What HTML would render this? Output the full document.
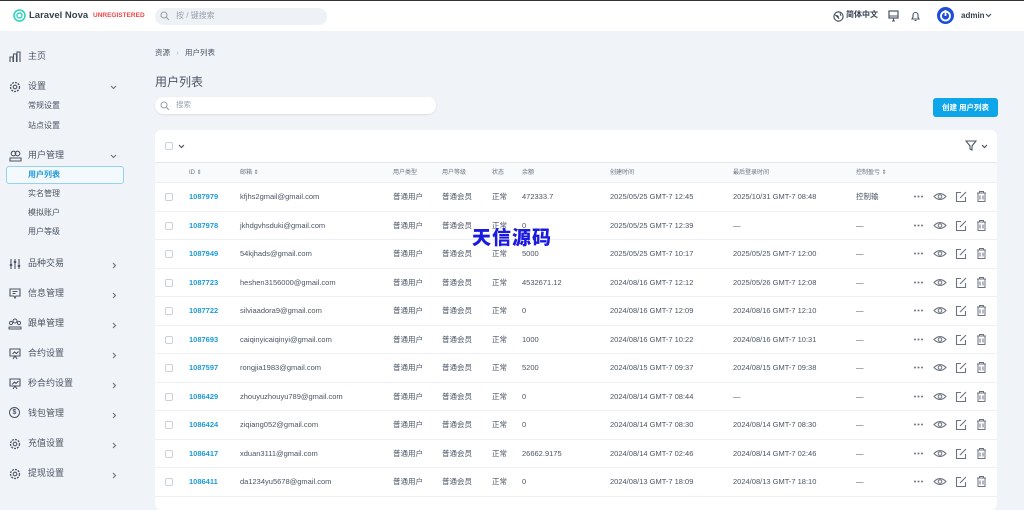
<!DOCTYPE html>
<html><head><meta charset="utf-8"><style>
*{box-sizing:border-box;margin:0;padding:0}
body{width:1024px;height:493px;overflow:hidden;background:#f0f3f8;font-family:"Liberation Sans","Noto Sans CJK SC",sans-serif;color:#4b5563;position:relative;font-size:8px}
.a{position:absolute;white-space:nowrap;line-height:1.2}
.top{position:absolute;left:0;top:0;width:1024px;height:31px;background:#fff;border-top:1px solid #333}
.side{font-size:9px;color:#4b5563}
.sub{font-size:8px;color:#4b5563}
.card{position:absolute;left:155px;top:130px;width:842px;height:380px;background:#fff;border-radius:6px}
.hdr{position:absolute;left:0;top:32px;width:842px;height:21px;background:#f9fafb;border-top:1px solid #e5e7eb;border-bottom:1px solid #eef0f3}
.th{font-size:6px;color:#6b7280;line-height:8px}
.row{position:absolute;left:0;width:842px;height:28.5px;border-bottom:1px solid #eef0f3;font-size:7.5px;color:#4b5563}
.row span{position:absolute;top:9px;line-height:10px;height:10px;white-space:nowrap}
.cb{position:absolute;width:8px;height:8px;border:1px solid #cbd1d8;border-radius:2px;background:#fff}
.id{color:#1d9bd8;font-weight:bold}
</style></head><body>
<div class="top"></div>
<svg class="a" style="left:13px;top:9px" width="13" height="13" viewBox="0 0 13 13"><circle cx="6.5" cy="6.5" r="5.5" fill="none" stroke="#2dd4bf" stroke-width="1.6"/><circle cx="6.5" cy="6.5" r="2.5" fill="none" stroke="#2dd4bf" stroke-width="1.4"/></svg>
<div class="a" style="left:29px;top:10px;font-size:9.5px;color:#374151;font-weight:bold">Laravel Nova</div>
<div class="a" style="left:93px;top:12px;font-size:6.5px;color:#ef4444;font-weight:bold">UNREGISTERED</div>
<div class="a" style="left:155px;top:8px;width:172px;height:17px;background:#eef1f5;border-radius:9px"></div>
<svg class="a" style="left:160px;top:11px" width="10" height="10" viewBox="0 0 10 10"><circle cx="4" cy="4" r="3" fill="none" stroke="#9ca3af" stroke-width="1.1"/><path d="M6.3 6.3L9 9" stroke="#9ca3af" stroke-width="1.1"/></svg>
<div class="a" style="left:176px;top:11px;font-size:8px;color:#9ca3af">按 / 键搜索</div>
<svg class="a" style="left:833px;top:11px" width="11" height="11" viewBox="0 0 11 11"><circle cx="5.5" cy="5.5" r="4.6" fill="none" stroke="#4b5563" stroke-width="1.2"/><path d="M2 4l3 1 1 3M7 2l1 3" stroke="#4b5563" stroke-width="1"/></svg>
<div class="a" style="left:846px;top:10px;font-size:8px;color:#374151;font-weight:bold">简体中文</div>
<svg class="a" style="left:888px;top:10px" width="11" height="12" viewBox="0 0 11 12"><rect x="1" y="1" width="9" height="7" fill="none" stroke="#4b5563" stroke-width="1.2"/><path d="M1 6h9M4 11h3M5.5 8v3" stroke="#4b5563" stroke-width="1.1"/></svg>
<svg class="a" style="left:910px;top:10px" width="11" height="12" viewBox="0 0 11 12"><path d="M2 9h7l-1-2V5a2.5 2.5 0 0 0-5 0v2z M4.5 10.5h2" fill="none" stroke="#4b5563" stroke-width="1.1"/></svg>
<svg class="a" style="left:937px;top:7px" width="17" height="17" viewBox="0 0 17 17"><circle cx="8.5" cy="8.5" r="8.5" fill="#1d4ed8"/><circle cx="8.5" cy="9" r="4.5" fill="none" stroke="#fff" stroke-width="1.8"/><path d="M8.5 3v6" stroke="#fff" stroke-width="1.8"/></svg>
<div class="a" style="left:961px;top:11px;font-size:8px;color:#374151;font-weight:bold">admin</div>
<svg class="a" style="left:985px;top:13px" width="7" height="5" viewBox="0 0 7 5"><path d="M1 1l2.5 2.5L6 1" fill="none" stroke="#4b5563" stroke-width="1.2"/></svg>

<!-- sidebar -->
<svg class="a" style="left:9px;top:51px" width="12" height="12" viewBox="0 0 12 12"><path d="M1 11V6h3v5M4.5 11V3h3v8M8 11V1h3v10" fill="none" stroke="#4b5563" stroke-width="1.1"/></svg>
<div class="a side" style="left:28px;top:51px">主页</div>
<svg class="a" style="left:9px;top:81px" width="12" height="12" viewBox="0 0 12 12"><circle cx="6" cy="6" r="4.5" fill="none" stroke="#4b5563" stroke-width="1.3" stroke-dasharray="2 1"/><circle cx="6" cy="6" r="1.8" fill="none" stroke="#4b5563" stroke-width="1.1"/></svg>
<div class="a side" style="left:28px;top:81px">设置</div>
<svg class="a" style="left:110px;top:85px" width="7" height="5" viewBox="0 0 7 5"><path d="M1 1l2.5 2.5L6 1" fill="none" stroke="#6b7280" stroke-width="1.1"/></svg>
<div class="a sub" style="left:28px;top:101px">常规设置</div>
<div class="a sub" style="left:28px;top:121px">站点设置</div>
<svg class="a" style="left:9px;top:150px" width="13" height="12" viewBox="0 0 13 12"><circle cx="4.5" cy="3.5" r="2.3" fill="none" stroke="#4b5563" stroke-width="1.1"/><circle cx="8.5" cy="3.5" r="2.3" fill="none" stroke="#4b5563" stroke-width="1.1"/><path d="M1 11V8h11v3z" fill="none" stroke="#4b5563" stroke-width="1.1"/></svg>
<div class="a side" style="left:28px;top:150px">用户管理</div>
<svg class="a" style="left:110px;top:154px" width="7" height="5" viewBox="0 0 7 5"><path d="M1 1l2.5 2.5L6 1" fill="none" stroke="#6b7280" stroke-width="1.1"/></svg>
<div class="a" style="left:6px;top:166px;width:118px;height:18px;border:1px solid #93d3f0;border-radius:3px;background:#f4f9fd"></div>
<div class="a sub" style="left:28px;top:170px;color:#1d9bd8;font-weight:bold">用户列表</div>
<div class="a sub" style="left:28px;top:189px">实名管理</div>
<div class="a sub" style="left:28px;top:208px">模拟账户</div>
<div class="a sub" style="left:28px;top:227px">用户等级</div>
<div class="a side" style="left:28px;top:258px">品种交易</div>
<div class="a side" style="left:28px;top:288px">信息管理</div>
<div class="a side" style="left:28px;top:318px">跟单管理</div>
<div class="a side" style="left:28px;top:348px">合约设置</div>
<div class="a side" style="left:28px;top:378px">秒合约设置</div>
<div class="a side" style="left:28px;top:408px">钱包管理</div>
<div class="a side" style="left:28px;top:438px">充值设置</div>
<div class="a side" style="left:28px;top:468px">提现设置</div>
<svg class="a" style="left:9px;top:258px" width="12" height="12" viewBox="0 0 12 12"><path d="M2 1v10M6 1v10M10 1v10" stroke="#4b5563" stroke-width="1.1"/><rect x="0.8" y="6" width="2.4" height="2" fill="#4b5563"/><rect x="4.8" y="3" width="2.4" height="2" fill="#4b5563"/><rect x="8.8" y="7" width="2.4" height="2" fill="#4b5563"/></svg>
<svg class="a" style="left:9px;top:288px" width="12" height="12" viewBox="0 0 12 12"><path d="M1 1h10v7H7l-1 2-1-2H1z M3.5 3.5h5M3.5 5.5h3" fill="none" stroke="#4b5563" stroke-width="1.1"/></svg>
<svg class="a" style="left:8px;top:318px" width="14" height="12" viewBox="0 0 14 12"><circle cx="7" cy="3" r="2" fill="none" stroke="#4b5563" stroke-width="1"/><circle cx="3" cy="5" r="1.6" fill="none" stroke="#4b5563" stroke-width="1"/><circle cx="11" cy="5" r="1.6" fill="none" stroke="#4b5563" stroke-width="1"/><path d="M1 11V9h12v2z" fill="none" stroke="#4b5563" stroke-width="1"/></svg>
<svg class="a" style="left:9px;top:348px" width="12" height="12" viewBox="0 0 12 12"><path d="M1 1h10v7H1zM4 11l2-3 2 3M3.5 6l2-2 2 1.5 2-2" fill="none" stroke="#4b5563" stroke-width="1.1"/></svg>
<svg class="a" style="left:9px;top:378px" width="12" height="12" viewBox="0 0 12 12"><path d="M1 1h10v7H1zM4 11l2-3 2 3M3 6.5l2.5-2.5 1.5 1.5 2.5-2.5" fill="none" stroke="#4b5563" stroke-width="1.1"/></svg>
<div class="a" style="left:9px;top:407px;width:11px;height:11px;border:1.3px solid #4b5563;border-radius:50%;font-size:7px;text-align:center;line-height:9px;font-weight:bold">$</div>
<svg class="a" style="left:9px;top:438px" width="12" height="12" viewBox="0 0 12 12"><circle cx="6" cy="6" r="4.5" fill="none" stroke="#4b5563" stroke-width="1.3" stroke-dasharray="2 1"/><circle cx="6" cy="6" r="1.8" fill="none" stroke="#4b5563" stroke-width="1.1"/></svg>
<svg class="a" style="left:9px;top:468px" width="12" height="12" viewBox="0 0 12 12"><circle cx="6" cy="6" r="4.5" fill="none" stroke="#4b5563" stroke-width="1.3" stroke-dasharray="2 1"/><circle cx="6" cy="6" r="1.8" fill="none" stroke="#4b5563" stroke-width="1.1"/></svg>
<div id="chev"></div>

<!-- main -->
<div class="a" style="left:155px;top:48px;font-size:7.5px;color:#4b5563">资源 &nbsp;&nbsp;<span style="color:#bbb">›</span>&nbsp;&nbsp; 用户列表</div>
<div class="a" style="left:155px;top:75px;font-size:12px;color:#4b5563">用户列表</div>
<div class="a" style="left:155px;top:97px;width:281px;height:17px;background:#fff;border-radius:9px;box-shadow:0 1px 2px rgba(0,0,0,.08)"></div>
<svg class="a" style="left:160px;top:101px" width="10" height="10" viewBox="0 0 10 10"><circle cx="4" cy="4" r="3" fill="none" stroke="#9ca3af" stroke-width="1.1"/><path d="M6.3 6.3L9 9" stroke="#9ca3af" stroke-width="1.1"/></svg>
<div class="a" style="left:176px;top:100px;font-size:7.5px;color:#9ca3af">搜索</div>
<div class="a" style="left:933px;top:98px;width:65px;height:19px;background:#0ea5e9;border-radius:3px;color:#fff;font-size:7.5px;font-weight:bold;text-align:center;line-height:19px">创建 用户列表</div>

<div class="card">
<div class="cb" style="left:10px;top:12px"></div>
<svg class="a" style="left:23px;top:14px" width="7" height="5" viewBox="0 0 7 5"><path d="M1 1l2.5 2.5L6 1" fill="none" stroke="#4b5563" stroke-width="1.2"/></svg>
<svg class="a" style="left:810px;top:10px" width="12" height="11" viewBox="0 0 12 11"><path d="M1 1h10L7 6v4L5 9V6z" fill="none" stroke="#4b5563" stroke-width="1.1"/></svg>
<svg class="a" style="left:826px;top:14px" width="7" height="5" viewBox="0 0 7 5"><path d="M1 1l2.5 2.5L6 1" fill="none" stroke="#4b5563" stroke-width="1.2"/></svg>
<div class="hdr">
<span class="a th" style="left:34px;top:6px">ID ⇕</span><span class="a th" style="left:85px;top:6px">邮箱 ⇕</span><span class="a th" style="left:238px;top:6px">用户类型</span><span class="a th" style="left:287px;top:6px">用户等级</span><span class="a th" style="left:337px;top:6px">状态</span><span class="a th" style="left:367px;top:6px">余额</span><span class="a th" style="left:455px;top:6px">创建时间</span><span class="a th" style="left:578px;top:6px">最后登录时间</span><span class="a th" style="left:701px;top:6px">控制盈亏 ⇕</span>
</div>
</div>
<div id="rows"></div>
<div class="a" style="left:472px;top:226px;font-size:19px;font-weight:900;color:#1a1ae0;letter-spacing:1px;font-family:'Noto Sans CJK SC',sans-serif">天信源码</div>
<script>
var c="";[262,292,322,352,382,412,442,472].forEach(function(y){c+='<svg class="a" style="left:112px;top:'+y+'px" width="5" height="7" viewBox="0 0 5 7"><path d="M1 1l2.5 2.5L1 6" fill="none" stroke="#6b7280" stroke-width="1.1"/></svg>';});
document.getElementById("chev").innerHTML=c;
var d=[["1087979","kfjhs2gmail@gmail.com","472333.7","2025/05/25 GMT-7 12:45","2025/10/31 GMT-7 08:48","控制输"],
["1087978","jkhdgvhsduki@gmail.com","0","2025/05/25 GMT-7 12:39","—","—"],
["1087949","54kjhads@gmail.com","5000","2025/05/25 GMT-7 10:17","2025/05/25 GMT-7 12:00","—"],
["1087723","heshen3156000@gmail.com","4532671.12","2024/08/16 GMT-7 12:12","2025/05/26 GMT-7 12:08","—"],
["1087722","silviaadora9@gmail.com","0","2024/08/16 GMT-7 12:09","2024/08/16 GMT-7 12:10","—"],
["1087693","caiqinyicaiqinyi@gmail.com","1000","2024/08/16 GMT-7 10:22","2024/08/16 GMT-7 10:31","—"],
["1087597","rongjia1983@gmail.com","5200","2024/08/15 GMT-7 09:37","2024/08/15 GMT-7 09:38","—"],
["1086429","zhouyuzhouyu789@gmail.com","0","2024/08/14 GMT-7 08:44","—","—"],
["1086424","ziqiang052@gmail.com","0","2024/08/14 GMT-7 08:30","2024/08/14 GMT-7 08:30","—"],
["1086417","xduan3111@gmail.com","26662.9175","2024/08/14 GMT-7 02:46","2024/08/14 GMT-7 02:46","—"],
["1086411","da1234yu5678@gmail.com","0","2024/08/13 GMT-7 18:09","2024/08/13 GMT-7 18:10","—"]];
var h="",ic='<svg style="position:absolute;left:758px;top:7px" width="76" height="13" viewBox="0 0 76 13"><circle cx="2" cy="6.5" r="1" fill="#6b7280"/><circle cx="5.5" cy="6.5" r="1" fill="#6b7280"/><circle cx="9" cy="6.5" r="1" fill="#6b7280"/><path d="M21 6.5q6-6 12 0q-6 6-12 0z" fill="none" stroke="#6b7280" stroke-width="1.1"/><circle cx="27" cy="6.5" r="1.8" fill="none" stroke="#6b7280" stroke-width="1"/><path d="M48 2.5h-4.5v9h9V7M47 8l6-6" fill="none" stroke="#6b7280" stroke-width="1.1"/><path d="M64 3h9M66.5 3V1.5h4V3M65 3.5v8h7v-8M67 5.5v4M70 5.5v4" fill="none" stroke="#6b7280" stroke-width="1"/></svg>';
d.forEach(function(r,i){var t=183+i*28.5;h+='<div class="row" style="left:155px;top:'+t+'px"><div class="cb" style="left:10px;top:10px"></div><span class="id" style="left:34px">'+r[0]+'</span><span style="left:85px">'+r[1]+'</span><span style="left:238px">普通用户</span><span style="left:287px">普通会员</span><span style="left:337px">正常</span><span style="left:367px">'+r[2]+'</span><span style="left:455px">'+r[3]+'</span><span style="left:578px">'+r[4]+'</span><span style="left:701px">'+r[5]+'</span>'+ic+'</div>';});
document.getElementById("rows").innerHTML=h;
</script>
</body></html>
